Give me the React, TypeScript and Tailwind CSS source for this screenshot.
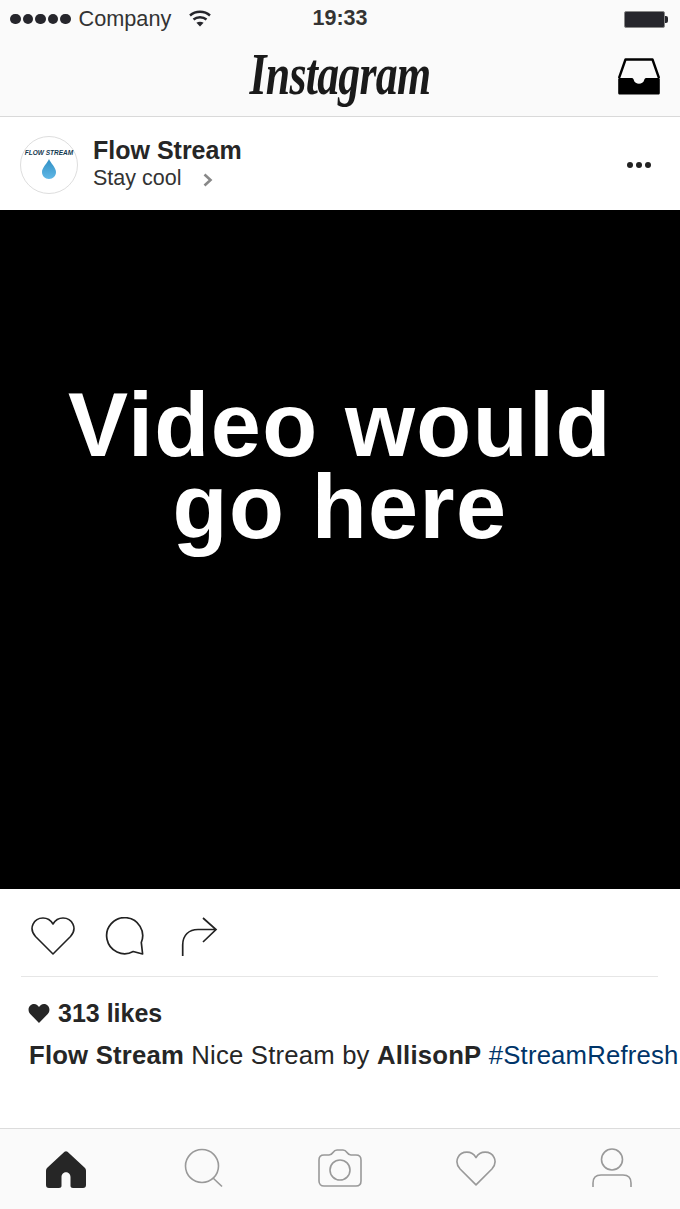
const sans = "font-['Liberation_Sans',Arial,sans-serif]";

const Heart = ({ className }: { className: string }) => (
  <svg viewBox="0 0 44 38" className={className} fill="none">
    <path d="M22 37 L4.5 19.5 C-3 11 3 1 12 1 C17 1 20 3.5 22 7 C24 3.5 27 1 32 1 C41 1 47 11 39.5 19.5 Z" strokeLinejoin="round" />
  </svg>
);

const StatusBar = () => (
  <div className="grid grid-cols-3 items-center h-[38px] px-[10px] text-[#262626]">
    <div className="flex items-center whitespace-nowrap">
      <div className="flex gap-[2px]">
        {[0, 1, 2, 3, 4].map((i) => (
          <span key={i} className="w-[10.5px] h-[10.5px] rounded-full bg-[#26262c]" />
        ))}
      </div>
      <span className="ml-[8px] text-[21.7px] leading-none text-[#333]">Company</span>
      <svg viewBox="0 0 22 17" className="w-[22px] h-[17px] ml-[18px]" fill="none" stroke="#26262c" strokeWidth="2.4">
        <path d="M1 5.5 C6.5 0.5 15.500 0.5 21 5.5" />
        <path d="M4.500 9.500 C8 6.500 14 6.500 17.500 9.500" />
        <path d="M11 16.500 L7.400 12.800 C9.500 11.300 12.500 11.300 14.600 12.800 Z" fill="#26262c" stroke="none" />
      </svg>
    </div>
    <div className="text-center text-[21.5px] leading-none font-bold text-[#333]">19:33</div>
    <div className="flex justify-end items-center pr-[2px]">
      <div className="w-[41px] h-[17px] rounded-[2px] border border-[#888] bg-[#26262c]" />
      <div className="w-[3px] h-[7px] bg-[#26262c] rounded-r-[2px]" />
    </div>
  </div>
);

const NavBar = () => (
  <div className="relative flex items-center justify-center h-[79px] border-b border-[#d9d9d9]">
    <span className="font-['Liberation_Serif',serif] italic font-bold text-[60px] leading-none tracking-[-1px] text-[#1a1a1a] -mt-[6px] scale-x-[0.73]">
      Instagram
    </span>
    <svg viewBox="0 0 42 37" className="absolute right-[20px] top-[20px] w-[42px] h-[37px]">
      <path d="M1 20 L7.5 1.5 H34.5 L41 20" fill="none" stroke="#000" strokeWidth="2.4" strokeLinejoin="round" />
      <path d="M1.5 20 H14 C15 20 15.5 21 15.8 22 C17 27 25 27 26.2 22 C26.5 21 27 20 28 20 H40.5 C41.5 20 41.8 20.5 41.8 21.5 V35 C41.8 36 41 36.6 40.5 36.6 H1.5 C1 36.6 0.2 36 0.2 35 V21.5 C0.2 20.5 0.5 20 1.5 20 Z" fill="#000" />
    </svg>
  </div>
);

const PostHeader = () => (
  <div className="flex items-center h-[93px] bg-white pl-[20px] pr-[29px]">
    <div className="w-[58px] h-[58px] mt-[2px] rounded-full border border-[#dedede] flex flex-col items-center pt-[13px] shrink-0">
      <span className="text-[6.5px] leading-none font-bold italic text-[#12384f] whitespace-nowrap">FLOW STREAM</span>
      <svg viewBox="0 0 14 20" className="w-[14px] h-[20px] mt-[3px]">
        <defs>
          <linearGradient id="drop" x1="0" y1="0" x2="0" y2="1">
            <stop offset="0" stopColor="#2f8fc4" />
            <stop offset="1" stopColor="#62b8e6" />
          </linearGradient>
        </defs>
        <path d="M7 0 C8.5 4 14 8.5 14 13 C14 17 11 20 7 20 C3 20 0 17 0 13 C0 8.5 5.5 4 7 0 Z" fill="url(#drop)" />
      </svg>
    </div>
    <div className="ml-[15px] text-[#262626]">
      <div className="text-[25px] leading-[28px] font-bold">Flow Stream</div>
      <div className="flex items-center text-[21.5px] leading-[28px] text-[#333]">
        Stay cool
        <svg viewBox="0 0 10 14" className="w-[10px] h-[14px] ml-[22px] mt-[4px]" fill="none" stroke="#888" strokeWidth="2.6">
          <path d="M1.5 1.5 L7.5 7 L1.5 12.5" />
        </svg>
      </div>
    </div>
    <div className="ml-auto mt-[2px] flex gap-[3px]">
      {[0, 1, 2].map((i) => (
        <span key={i} className="w-[6px] h-[6px] rounded-full bg-[#222]" />
      ))}
    </div>
  </div>
);

const Actions = () => (
  <div className="flex items-start h-[87px] pt-[28px] pl-[31px]">
    <Heart className="w-[44px] h-[38px] stroke-[#222] [stroke-width:1.6]" />
    <svg viewBox="0 0 40 40" className="w-[40px] h-[40px] ml-[30px]" fill="none" stroke="#222" strokeWidth="1.7">
      <path d="M28.2 34.500 A18 18 0 1 1 36.300 25.500 L37.600 37 Z" strokeLinejoin="round" />
    </svg>
    <svg viewBox="0 0 37 40" className="w-[37px] h-[40px] ml-[36px]" fill="none" stroke="#222" strokeWidth="1.7">
      <path d="M1.700 39 V28 C1.700 18 8 12.500 17 12.500 H35 M22 1 L35 12.500 L22 25" />
    </svg>
  </div>
);

const Caption = () => (
  <div className="bg-white">
    <div className="mx-[21px] w-[637px] border-t border-[#e6e6e6]" />
    <div className="flex items-center mt-[24px] pl-[28px] h-[25px] text-[25px] font-bold text-[#262626] leading-none">
      <svg viewBox="0 0 44 38" className="w-[22px] h-[19px] mr-[8px]" fill="#262626">
        <path d="M22 38 L4.500 20 C-3 11 3 0 12 0 C17 0 20 3 22 6 C24 3 27 0 32 0 C41 0 47 11 39.500 20 Z" />
      </svg>
      313 likes
    </div>
    <div className="mt-[15px] pl-[29px] text-[25.7px] leading-[28px] text-[#262626] whitespace-nowrap tracking-[0.2px]">
      <span className="font-bold">Flow Stream</span> Nice Stream by <span className="font-bold">AllisonP</span>{" "}
      <span className="text-[#003569]">#StreamRefresh</span>
    </div>
  </div>
);

const TabBar = () => (
  <div className="grid grid-cols-5 items-center justify-items-center h-[81px] bg-[#fafafa] border-t border-[#dcdcdc] pb-[2px]">
    <svg viewBox="0 0 40 37" className="w-[40px] h-[37px] mt-[3px] -ml-[4px]" fill="#262626">
      <path d="M18.500 0.800 Q20 -0.300 21.500 0.800 L38.500 16.500 C39.500 17.500 40 18.500 40 20 V34 C40 36 39 37 37 37 H27 C25.500 37 24.500 36.300 24.500 35 V26 C24.500 19.500 15.500 19.500 15.500 26 V35 C15.500 36.300 14.500 37 13 37 H3 C1 37 0 36 0 34 V20 C0 18.500 0.500 17.500 1.500 16.500 Z" />
    </svg>
    <svg viewBox="0 0 40 40" className="w-[40px] h-[40px]" fill="none" stroke="#999" strokeWidth="1.6">
      <circle cx="18" cy="18" r="16.500" />
      <path d="M29 30 L38 38.500" />
    </svg>
    <svg viewBox="0 0 44 38" className="w-[44px] h-[38px]" fill="none" stroke="#999" strokeWidth="1.6">
      <path d="M6 6 H11 C13 6 14 5 15 3.500 C16 2 17 1 19 1 H25 C27 1 28 2 29 3.500 C30 5 31 6 33 6 H38 C41 6 43 8 43 11 V32 C43 35 41 37 38 37 H6 C3 37 1 35 1 32 V11 C1 8 3 6 6 6 Z" />
      <circle cx="22" cy="21" r="10" />
    </svg>
    <Heart className="w-[40px] h-[35px] stroke-[#999] [stroke-width:1.8]" />
    <svg viewBox="0 0 40 40" className="w-[40px] h-[40px]" fill="none" stroke="#999" strokeWidth="1.6">
      <circle cx="20" cy="11.500" r="10.500" />
      <path d="M1 39 V35 C1 30 4 27 9 27 H31 C36 27 39 30 39 35 V39" />
    </svg>
  </div>
);

const App = () => {
  return (
    <div className={`w-[680px] h-[1209px] flex flex-col bg-white overflow-hidden ${sans}`}>
      <div className="bg-[#fafafa]">
        <StatusBar />
        <NavBar />
      </div>
      <PostHeader />
      <div className="h-[679px] bg-black pt-[174px]">
        <p className="text-white font-bold text-[90px] leading-[82px] text-center tracking-[1.4px]">
          Video would
          <br />
          go here
        </p>
      </div>
      <Actions />
      <Caption />
      <div className="flex-1" />
      <TabBar />
    </div>
  );
};

export default App;
